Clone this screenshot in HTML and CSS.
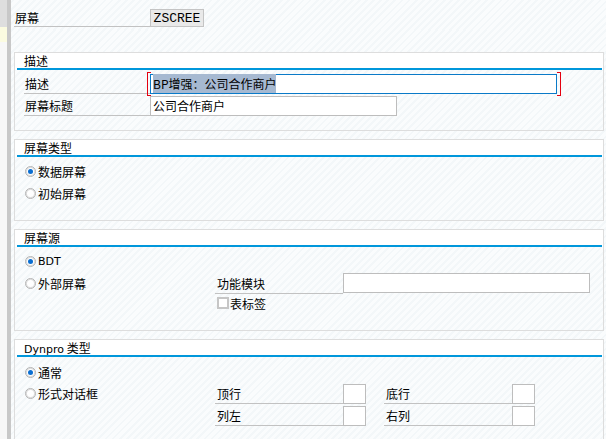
FILE: index.html
```html
<!DOCTYPE html>
<html lang="zh">
<head>
  <meta charset="UTF-8" />
  <title>屏幕属性</title>
  <link rel="stylesheet" href="styles.css">
</head>
<body>
  <div class="side">
    <div class="side-top"></div>
    <div class="side-mark"></div>
    <div class="side-dots"><span></span><span></span></div>
  </div>
  <div class="rail"></div>

  <div class="main">
    <div class="head-row">
      <span class="head-label">屏幕</span>
      <span class="screen-no">ZSCREE</span>
    </div>

    <!-- 描述 -->
    <div class="group g-desc">
      <div class="group-title">描述</div>
      <div class="group-body">
        <div class="field-row">
          <span class="label">描述</span>
          <span class="input focus wide"><span class="sel">BP增强：公司合作商户</span></span>
        </div>
        <div class="field-row">
          <span class="label">屏幕标题</span>
          <span class="input mid">公司合作商户</span>
        </div>
      </div>
    </div>

    <!-- 屏幕类型 -->
    <div class="group g-type">
      <div class="group-title">屏幕类型</div>
      <div class="group-body">
        <div class="opt-row"><span class="radio on"></span>数据屏幕</div>
        <div class="opt-row"><span class="radio"></span>初始屏幕</div>
      </div>
    </div>

    <!-- 屏幕源 -->
    <div class="group g-src">
      <div class="group-title">屏幕源</div>
      <div class="group-body">
        <div class="opt-row"><span class="radio on"></span><span class="latin">BDT</span></div>
        <div class="opt-row">
          <span class="opt-text"><span class="radio"></span>外部屏幕</span>
          <span class="sub-label">功能模块</span>
          <span class="input fm"></span>
        </div>
        <div class="opt-row check-row">
          <span class="opt-text"></span>
          <span class="check"></span>表标签
        </div>
      </div>
    </div>

    <!-- Dynpro 类型 -->
    <div class="group g-dyn">
      <div class="group-title"><span class="latin">Dynpro</span> 类型</div>
      <div class="group-body">
        <div class="opt-row"><span class="radio on"></span>通常</div>
        <div class="opt-row">
          <span class="opt-text"><span class="radio"></span>形式对话框</span>
          <span class="sub-label">顶行</span><span class="input tiny"></span>
          <span class="sub-label second">底行</span><span class="input tiny"></span>
        </div>
        <div class="opt-row">
          <span class="opt-text"></span>
          <span class="sub-label">列左</span><span class="input tiny"></span>
          <span class="sub-label second">右列</span><span class="input tiny"></span>
        </div>
      </div>
    </div>
  </div>
</body>
</html>
```

FILE: styles.css
```css
body {
  margin: 0;
  height: 439px;
  overflow: hidden;
  display: flex;
  font-family: "Noto Sans CJK SC", "Liberation Sans", sans-serif;
  font-size: 12px;
  color: #000;
  background: #fff;
}

.side {
  width: 7px;
  background-color: #f7f7f7;
  display: flex;
  flex-direction: column;
}

.side-top {
  height: 27px;
  background-color: #dedede;
}

.side-mark {
  height: 15px;
  background-color: #fbfbe0;
}

.side-dots {
  margin-top: auto;
  padding: 0 0 1px 7px;
}

.side-dots span {
  display: block;
  width: 2px;
  height: 2px;
  margin-top: 2px;
  background-color: #555;
}

.rail {
  width: 4px;
  background-color: #c8c8c8;
}

.main {
  flex: 1;
  padding: 9px 2px 0 3px;
  background: repeating-linear-gradient(135deg, #f3f7f9 0 2px, #fafcfd 2px 5px);
  background-position: 0 30px;
}

.head-row {
  display: flex;
  height: 18px;
  margin-bottom: 25px;
}

.head-label {
  width: 135px;
  padding-left: 1px;
  border-bottom: 1px solid #c2c2c2;
  line-height: 18px;
}

.screen-no {
  width: 52px;
  text-align: center;
  font-family: "Liberation Mono", monospace;
  font-size: 13px;
  line-height: 17px;
  background-color: #e9e9e9;
  border: 1px solid #c4c4c4;
}

.group {
  width: 588px;
  border: 1px solid #dddddd;
  margin-bottom: 8px;
}

.group-title {
  background-color: #fff;
  height: 15px;
  line-height: 15px;
  padding-left: 7px;
  margin: 0 1px 0 2px;
  border-bottom: 2px solid #0097db;
  box-shadow: -2px 0 0 #fff, 1px 0 0 #fff;
}

.group-body {
  padding-left: 9px;
}

.g-desc .group-body {
  padding-top: 4px;
  height: 56px;
}

.g-type .group-body {
  height: 60px;
  padding-top: 3px;
}

.g-src .group-body {
  height: 80px;
  padding-top: 3px;
}

.g-dyn .group-body {
  height: 90px;
  padding-top: 5px;
}

.field-row {
  display: flex;
  height: 20px;
  margin-bottom: 2px;
}

.label {
  width: 125px;
  padding-left: 1px;
  border-bottom: 1px solid #c2c2c2;
  line-height: 20px;
}

.input {
  box-sizing: border-box;
  background-color: #fff;
  border: 1px solid #bdbdbd;
  height: 20px;
  line-height: 18px;
  padding-left: 2px;
}

.wide {
  width: 407px;
}

.mid {
  width: 247px;
}

.focus {
  position: relative;
  border-color: #0a7ac8;
}

/* red focus brackets at both ends of the field */
.focus::before,
.focus::after {
  content: "";
  position: absolute;
  top: -3px;
  bottom: -3px;
  width: 3px;
  border-top: 1px solid #e4000f;
  border-bottom: 1px solid #e4000f;
}

.focus::before {
  left: -4px;
  border-left: 1px solid #e4000f;
}

.focus::after {
  right: -5px;
  border-right: 1px solid #e4000f;
}

.sel {
  background-color: #a6b9d1;
  padding: 1px 0;
}

.opt-row {
  display: flex;
  align-items: center;
  height: 22px;
}

.opt-text {
  display: flex;
  align-items: center;
  width: 191px;
}

.radio {
  box-sizing: border-box;
  width: 11px;
  height: 11px;
  border: 1px solid #b4b4b4;
  border-radius: 50%;
  background-color: #fff;
  box-shadow: inset 0 0 0 1px #dcdcdc;
  margin: 0 2px 0 1px;
  position: relative;
}

.radio.on::after {
  content: "";
  position: absolute;
  left: 2px;
  top: 2px;
  width: 5px;
  height: 5px;
  border-radius: 50%;
  background-color: #0a6ed1;
}

.check-row {
  margin-top: -2px;
}

.check {
  box-sizing: border-box;
  width: 12px;
  height: 12px;
  border: 2px solid #c6c6c6;
  background-color: #fff;
  margin: 0 1px 0 2px;
}

.latin {
  font-family: "DejaVu Sans", sans-serif;
  font-size: 11px;
}

.sub-label {
  box-sizing: border-box;
  width: 128px;
  height: 20px;
  line-height: 20px;
  padding-left: 2px;
  border-bottom: 1px solid #c2c2c2;
  align-self: flex-end;
}

.sub-label.second {
  margin-left: 18px;
}

.fm {
  width: 247px;
  height: 20px;
}

.tiny {
  width: 23px;
  height: 20px;
}

.g-dyn .opt-row {
  height: 21px;
}

.g-dyn .opt-row + .opt-row + .opt-row {
  margin-top: 1px;
}
```
